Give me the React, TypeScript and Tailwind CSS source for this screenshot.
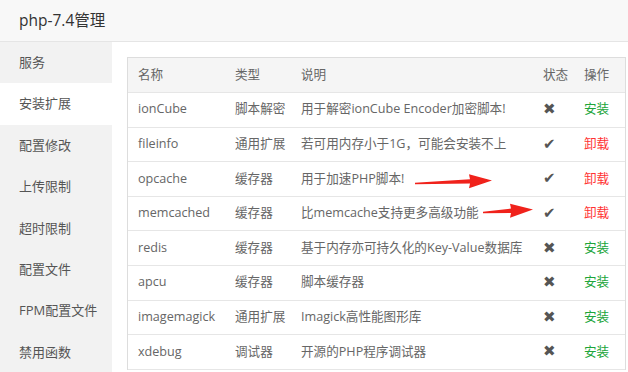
import React from 'react';

type Ext = {
  name: string;
  type: string;
  desc: string;
  installed: boolean;
};

const menu = ['服务', '安装扩展', '配置修改', '上传限制', '超时限制', '配置文件', 'FPM配置文件', '禁用函数'];

const exts: Ext[] = [
  { name: 'ionCube', type: '脚本解密', desc: '用于解密ionCube Encoder加密脚本!', installed: false },
  { name: 'fileinfo', type: '通用扩展', desc: '若可用内存小于1G，可能会安装不上', installed: true },
  { name: 'opcache', type: '缓存器', desc: '用于加速PHP脚本!', installed: true },
  { name: 'memcached', type: '缓存器', desc: '比memcache支持更多高级功能', installed: true },
  { name: 'redis', type: '缓存器', desc: '基于内存亦可持久化的Key-Value数据库', installed: false },
  { name: 'apcu', type: '缓存器', desc: '脚本缓存器', installed: false },
  { name: 'imagemagick', type: '通用扩展', desc: 'Imagick高性能图形库', installed: false },
  { name: 'xdebug', type: '调试器', desc: '开源的PHP程序调试器', installed: false },
];

const cols = 'grid grid-cols-[97px_66px_242px_41px_51px]';

// tapered red arrow drawn over the table, pointing right and slightly up
function RedArrow({ x, y, len, rise }: { x: number; y: number; len: number; rise: number }) {
  const head = 22;
  const tailY = 12 + rise / 2;
  const tipY = 12 - rise / 2;
  const baseY = tipY + (rise * head) / len;
  return (
    <svg
      className="absolute pointer-events-none"
      style={{ left: x, top: y - 12 }}
      width={len + 2}
      height={24}
      viewBox={`0 0 ${len + 2} 24`}
    >
      <polygon
        points={[
          `0,${tailY - 0.8}`,
          `${len - head},${baseY - 2.2}`,
          `${len - head - 1},${baseY - 7}`,
          `${len},${tipY}`,
          `${len - head - 1},${baseY + 7}`,
          `${len - head},${baseY + 2.2}`,
          `0,${tailY + 0.8}`,
        ].join(' ')}
        fill="#f0221b"
      />
    </svg>
  );
}

export default function App() {
  return (
    <div className="w-[628px] h-[372px] overflow-hidden bg-white text-[#555] relative font-['Open_Sans','Noto_Sans_CJK_SC',sans-serif]">
      <div className="h-[42px] bg-[#f8f8f8] border-b border-[#e5e5e5] flex items-center pl-[19px] text-[15.5px] text-[#333]">
        php-7.4管理
      </div>
      <div className="flex">
        <div className="w-[112px] h-[330px] bg-[#f2f2f2] shrink-0">
          {menu.map((m, i) => (
            <div
              key={m}
              className={`h-[41.4px] flex items-center pl-[19px] text-[13px] text-[#555] ${i === 1 ? 'bg-white' : ''}`}
            >
              {m}
            </div>
          ))}
        </div>
        <div className="pl-[15px] pt-[15px] pr-[4px] flex-1">
          <div className="border-x border-t border-[#ddd] text-[12.6px] text-[#666]">
            <div className={`${cols} h-[35px] items-center bg-[#f5f5f5] border-b border-[#e6e6e6]`}>
              <div className="pl-[10px]">名称</div>
              <div className="pl-[10px]">类型</div>
              <div className="pl-[10px]">说明</div>
              <div className="pl-[10px]">状态</div>
              <div className="pl-[10px]">操作</div>
            </div>
            {exts.map(e => (
              <div key={e.name} className={`${cols} h-[34.6px] items-center border-b border-[#e6e6e6]`}>
                <div className="pl-[10px]">{e.name}</div>
                <div className="pl-[10px]">{e.type}</div>
                <div className="pl-[10px] whitespace-nowrap">{e.desc}</div>
                <div className="pl-[10px] text-[#555] text-[15px] leading-none font-['DejaVu_Sans',sans-serif]">
                  {e.installed ? '✔' : '✖'}
                </div>
                <div className={`pl-[10px] ${e.installed ? 'text-[#ff3333]' : 'text-[#20a53a]'}`}>
                  {e.installed ? '卸载' : '安装'}
                </div>
              </div>
            ))}
          </div>
        </div>
      </div>
      <RedArrow x={415} y={182} len={77} rise={3} />
      <RedArrow x={483} y={211} len={50} rise={3} />
    </div>
  );
}
